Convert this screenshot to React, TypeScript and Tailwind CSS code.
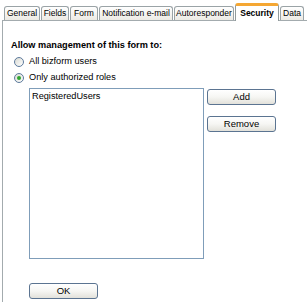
import React from "react";

const tabs: { label: string; w: string }[] = [
  { label: "General", w: "w-[36px]" },
  { label: "Fields", w: "w-[28px]" },
  { label: "Form", w: "w-[28px]" },
  { label: "Notification e-mail", w: "w-[74px]" },
  { label: "Autoresponder", w: "w-[60px]" },
  { label: "Security", w: "w-[44px]" },
  { label: "Data", w: "w-[24px]" },
];

function Radio({ checked, label }: { checked?: boolean; label: string }) {
  return (
    <div className="flex items-center gap-[5px] h-[16px] ml-[3px]">
      <span className="w-[10px] h-[10px] rounded-full border border-[#5d7a9c] bg-gradient-to-br from-[#d9dad3] to-white flex items-center justify-center">
        {checked && <span className="w-[4px] h-[4px] rounded-full bg-[#2fa52f]" />}
      </span>
      <span>{label}</span>
    </div>
  );
}

function Btn({ children }: { children: React.ReactNode }) {
  return (
    <button className="h-[16px] w-[69px] rounded-[3px] border border-[#5b7491] bg-gradient-to-b from-white via-[#f6f6f3] to-[#e2e1da] text-[9.5px] leading-none text-black">
      {children}
    </button>
  );
}

export default function App() {
  return (
    <div className="w-[307px] h-[302px] bg-white overflow-hidden font-['Liberation_Sans',Arial,sans-serif] text-[9.2px] text-black">
      {/* tab strip */}
      <div className="flex items-end h-[20px] pl-[4px] gap-[1px] text-[8.5px]">
        {tabs.map((t) =>
          t.label === "Security" ? (
            <div
              key={t.label}
              className={`${t.w} h-[18px] -mb-[1px] relative z-10 flex items-center justify-center border-x border-[#919b9c] border-t-[3px] border-t-[#f5a733] rounded-t-[3px] bg-white font-bold whitespace-nowrap`}
            >
              {t.label}
            </div>
          ) : (
            <div
              key={t.label}
              className={`${t.w} h-[14px] flex items-center justify-center border border-b-0 border-[#9aa3a6] rounded-t-[3px] bg-gradient-to-b from-white to-[#eceae4] whitespace-nowrap`}
            >
              {t.label}
            </div>
          )
        )}
      </div>

      {/* panel */}
      <div className="ml-[2px] h-[282px] border-l border-t border-[#a3abae] pl-[8px] pt-[19px]">
        <div className="font-bold leading-[11px]">Allow management of this form to:</div>
        <div className="mt-[3px] flex flex-col">
          <Radio label="All bizform users" />
          <Radio checked label="Only authorized roles" />
        </div>
        <div className="flex mt-[2px] ml-[18px] gap-[3px]">
          <div className="w-[175px] h-[171px] border border-[#7f9db9] pl-[2px] pt-[2px] leading-[11px]">
            RegisteredUsers
          </div>
          <div className="flex flex-col gap-[11px] pt-[1px]">
            <Btn>Add</Btn>
            <Btn>Remove</Btn>
          </div>
        </div>
        <div className="ml-[18px] mt-[24px]">
          <Btn>OK</Btn>
        </div>
      </div>
    </div>
  );
}
